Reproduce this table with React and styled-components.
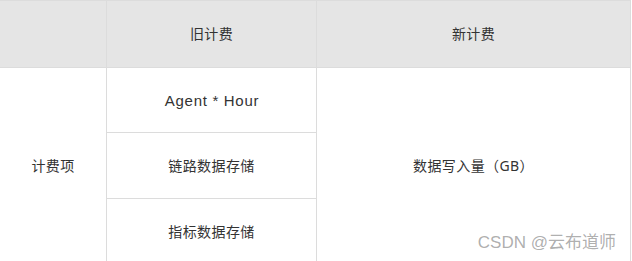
import React from "react";
import styled, { createGlobalStyle } from "styled-components";

const GlobalStyle = createGlobalStyle`
  html, body {
    margin: 0;
    padding: 0;
    background: #fff;
    overflow: hidden;
  }
  body {
    font-family: "Noto Sans", "Noto Sans CJK SC", sans-serif;
    color: #333;
  }
`;

const Page = styled.div`
  position: relative;
  width: 632px;
  height: 261px;
  overflow: hidden;
`;

const Table = styled.div`
  display: grid;
  grid-template-columns: 106px 209px 313px;
  grid-template-rows: 66px 64px 65px 65px;
  gap: 1px;
  padding: 1px;
  margin-left: -1px;
  width: max-content;
  background: #dcdcdc;
`;

const Cell = styled.div`
  display: flex;
  align-items: center;
  justify-content: center;
  background: ${(p) => (p.$head ? "#e5e5e5" : "#fff")};
  font-size: 14px;
  letter-spacing: 0.4px;
  line-height: 1;
  grid-column: ${(p) => p.$col};
  grid-row: ${(p) => p.$row};
`;

const Latin = styled.span`
  font-family: "Liberation Sans", "Noto Sans", sans-serif;
  font-size: 15px;
  letter-spacing: 0.7px;
  padding-left: 1px;
`;

const Watermark = styled.div`
  position: absolute;
  right: 16px;
  top: 233px;
  font-size: 17px;
  line-height: 20px;
  color: rgba(130, 130, 130, 0.65);
  font-family: "Liberation Sans", "Noto Sans CJK SC", sans-serif;
`;

const rows = [<Latin>Agent * Hour</Latin>, "链路数据存储", "指标数据存储"];

export default function App() {
  return (
    <Page>
      <GlobalStyle />
      <Table>
        <Cell $head $col="1" $row="1" />
        <Cell $head $col="2" $row="1">旧计费</Cell>
        <Cell $head $col="3" $row="1">新计费</Cell>
        <Cell $col="1" $row="2 / span 3">计费项</Cell>
        {rows.map((r, i) => (
          <Cell key={i} $col="2" $row={`${i + 2}`}>
            {r}
          </Cell>
        ))}
        <Cell $col="3" $row="2 / span 3">数据写入量（GB）</Cell>
      </Table>
      <Watermark>CSDN @云布道师</Watermark>
    </Page>
  );
}
